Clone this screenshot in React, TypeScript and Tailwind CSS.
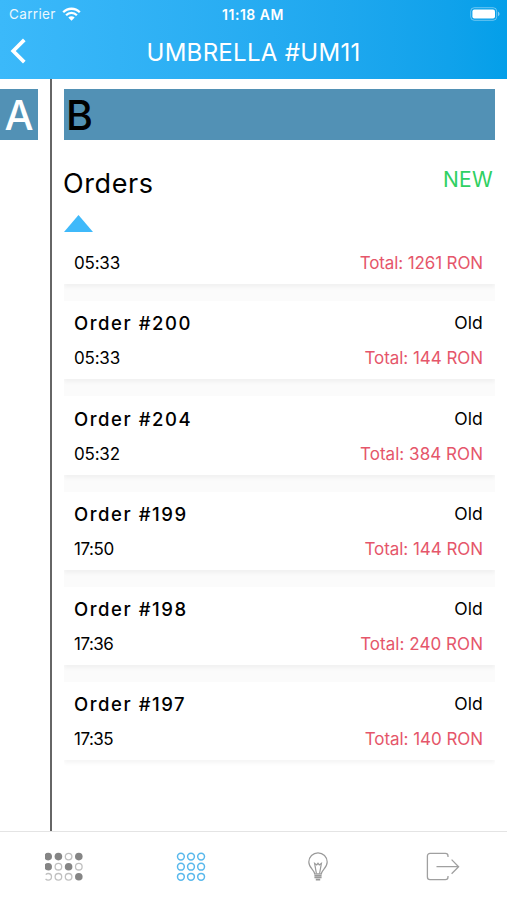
import React from "react";

interface Order {
  id?: string;
  time: string;
  timeClass: string;
  total: string;
  totalClass: string;
}

const orders: Order[] = [
  {
    time: "05:33",
    timeClass: "tracking-[-0.2px]",
    total: "Total: 1261 RON",
    totalClass: "tracking-[-0.12px]",
  },
  {
    id: "Order #200",
    time: "05:33",
    timeClass: "tracking-[-0.2px]",
    total: "Total: 144 RON",
    totalClass: "tracking-[-0.05px]",
  },
  {
    id: "Order #204",
    time: "05:32",
    timeClass: "tracking-[-0.2px]",
    total: "Total: 384 RON",
    totalClass: "tracking-[0.05px]",
  },
  {
    id: "Order #199",
    time: "17:50",
    timeClass: "tracking-[-0.45px]",
    total: "Total: 144 RON",
    totalClass: "tracking-[-0.05px]",
  },
  {
    id: "Order #198",
    time: "17:36",
    timeClass: "tracking-[-0.5px]",
    total: "Total: 240 RON",
    totalClass: "tracking-[0.05px]",
  },
  {
    id: "Order #197",
    time: "17:35",
    timeClass: "tracking-[-0.5px]",
    total: "Total: 140 RON",
    totalClass: "tracking-[-0.05px]",
  },
];

const WifiIcon = () => (
  <svg className="ml-[6px] h-[14px] w-[19px]" viewBox="0 0 19 14" fill="none">
    <path
      d="M1.2 5.2C5.8.6 13.2.6 17.8 5.2M4.1 8.2c3-3 7.8-3 10.8 0"
      stroke="white"
      strokeWidth="2.3"
    />
    <path d="M6.3 10.5c1.8-1.6 4.6-1.6 6.4 0L9.5 13.8z" fill="white" />
  </svg>
);

const BatteryIcon = () => (
  <svg className="h-[14px] w-[31px]" viewBox="0 0 31 14" fill="none">
    <rect
      x="0.7"
      y="0.7"
      width="26"
      height="12.6"
      rx="3.6"
      stroke="white"
      strokeOpacity="0.4"
    />
    <rect x="2.4" y="2.5" width="22.6" height="9" rx="2" fill="white" />
    <path d="M28 4.8c2 .7 2 3.7 0 4.4z" fill="white" fillOpacity="0.5" />
  </svg>
);

const StatusBar = () => (
  <div className="grid h-7 grid-cols-3 items-center pr-[6px] pl-[9px] text-[13.5px] leading-none text-white">
    <div className="flex items-center">
      <span className="pt-px tracking-[0.35px] opacity-90">Carrier</span>
      <WifiIcon />
    </div>
    <span className="pt-px pr-[4px] text-center text-[14px] font-semibold tracking-[0.5px]">
      11:18 AM
    </span>
    <div className="flex justify-end">
      <BatteryIcon />
    </div>
  </div>
);

const Header = () => (
  <header className="h-[79px] shrink-0 bg-linear-to-r from-[#3bb9fa] to-[#049fe9]">
    <StatusBar />
    <div className="grid h-[48px] grid-cols-[40px_1fr_40px] items-center">
      <svg
        className="-mt-[2px] ml-[9px] h-[26px] w-[17px]"
        viewBox="0 0 17 26"
        fill="none"
      >
        <path
          d="M15.3 1.9 4.2 13l11.1 11.1"
          stroke="white"
          strokeWidth="3.7"
        />
      </svg>
      <h1 className="pt-[2px] text-center text-[24px] tracking-[0.3px] whitespace-nowrap text-white">
        UMBRELLA #UM11
      </h1>
    </div>
  </header>
);

const OrderCard = ({ order }: { order: Order }) => (
  <div className="bg-white pr-[12px] pb-[9px] pl-[10px] shadow-[0_3px_4px_rgba(0,0,0,0.045)]">
    {order.id && (
      <div className="flex h-[35.3px] items-end justify-between">
        <span className="text-[18.5px] leading-[25px] font-medium tracking-[1.55px]">
          {order.id}
        </span>
        <span className="text-[17.5px] leading-[26px] tracking-[0.15px]">
          Old
        </span>
      </div>
    )}
    <div className="flex h-[34px] items-end justify-between text-[17px] leading-[24px]">
      <span className={order.timeClass}>{order.time}</span>
      <span className={`text-[#e5566a] ${order.totalClass}`}>
        {order.total}
      </span>
    </div>
  </div>
);

const SeatsIcon = () => (
  <svg className="h-[30px] w-[40px]" viewBox="0 0 40 30" fill="none">
    {[
      [1, 1, 0, 1],
      [1, 0, 1, 0],
      [0, 0, 0, 1],
    ].map((row, y) =>
      row.map((full, x) => (
        <circle
          key={`${x}-${y}`}
          cx={3.2 + x * 10.2}
          cy={4.6 + y * 10.1}
          r={full ? 3.8 : 3.3}
          fill={full ? "#858585" : "none"}
          stroke={full ? "none" : "#c0c0c0"}
          strokeWidth="1.3"
          strokeDasharray={y === 2 && x === 0 ? "8 4.5 8" : undefined}
        />
      )),
    )}
  </svg>
);

const GridIcon = () => (
  <svg className="h-[30px] w-[30px]" viewBox="0 0 30 30" fill="none">
    {[0, 1, 2].map((y) =>
      [0, 1, 2].map((x) => (
        <circle
          key={`${x}-${y}`}
          cx={4.9 + x * 10.1}
          cy={4.6 + y * 10.1}
          r="3.4"
          stroke="#58b8ec"
          strokeWidth="1.5"
        />
      )),
    )}
  </svg>
);

const BulbIcon = () => (
  <svg
    className="h-[30px] w-[22px]"
    viewBox="0 0 22 30"
    fill="none"
    stroke="#9a9a9a"
    strokeWidth="1.2"
  >
    <path d="M7.6 21.8c0-3.6-5.8-6-5.8-11.8a9.2 9.2 0 0 1 18.4 0c0 5.8-5.8 8.2-5.8 11.8z" />
    <path d="M9.4 21.5 7.6 11.3l2.1 1.6 1.3-1.6 1.3 1.6 2.1-1.6-1.8 10.2" />
    <path d="M7.4 23.6h7.2M7.4 25.5h7.2M8.8 27.6h4.4" strokeWidth="1.6" />
  </svg>
);

const ExitIcon = () => (
  <svg
    className="h-[30px] w-[34px]"
    viewBox="0 0 34 30"
    fill="none"
    stroke="#a0a0a0"
    strokeWidth="1.3"
  >
    <path d="M22 5V4a2.6 2.6 0 0 0-2.6-2.6H4A2.6 2.6 0 0 0 1.4 4v21A2.6 2.6 0 0 0 4 27.6h15.4A2.6 2.6 0 0 0 22 25v-1" />
    <path d="M10.5 14.7H32.5M25.6 7.6l7 7.1-7 7.1" />
  </svg>
);

const TabBar = () => (
  <nav className="flex h-[69px] shrink-0 border-t border-[#e4e4e4] bg-white pt-[20px]">
    <div className="w-[126.75px] pl-[45px]">
      <SeatsIcon />
    </div>
    <div className="flex w-[126.75px] justify-center pl-[2px]">
      <GridIcon />
    </div>
    <div className="flex w-[126.75px] justify-center pl-[2px]">
      <BulbIcon />
    </div>
    <div className="flex w-[126.75px] justify-center pr-[2px]">
      <ExitIcon />
    </div>
  </nav>
);

const App = () => {
  return (
    <div className="flex h-[900px] w-[507px] flex-col overflow-hidden bg-white font-['Inter',sans-serif] text-black">
      <Header />
      <main className="flex min-h-0 flex-1">
        <aside className="w-[52px] shrink-0 border-r-2 border-[#666] pt-[10px]">
          <div className="flex h-[51px] w-[38px] items-center justify-center bg-[#5291b5] pt-[2px] text-[41px] font-medium text-white">
            A
          </div>
        </aside>
        <section className="flex flex-1 flex-col pt-[10px] pr-[12px] pl-[12px]">
          <div className="flex h-[51px] shrink-0 items-center bg-[#5291b5] pt-[2px] pl-[2px] text-[41px] font-medium">
            B
          </div>
          <div className="flex h-[75px] shrink-0 justify-between">
            <h2 className="-ml-px pt-[26px] text-[27px] leading-[36px] tracking-[0.6px]">
              Orders
            </h2>
            <span className="pt-[25px] pr-[2px] text-[21px] leading-[30px] tracking-[0.3px] text-[#2fd062]">
              NEW
            </span>
          </div>
          <svg className="h-[17px] w-[29px] shrink-0" viewBox="0 0 29 17">
            <path d="M0 17 14.5 0 29 17z" fill="#3fb9fa" />
          </svg>
          <div className="flex min-h-0 flex-1 flex-col overflow-hidden">
            <div className="h-[9px] shrink-0" />
            <div className="flex flex-col gap-[17px] bg-[#fbfbfb]">
              {orders.map((order, i) => (
                <OrderCard key={i} order={order} />
              ))}
            </div>
          </div>
        </section>
      </main>
      <TabBar />
    </div>
  );
};

export default App;
